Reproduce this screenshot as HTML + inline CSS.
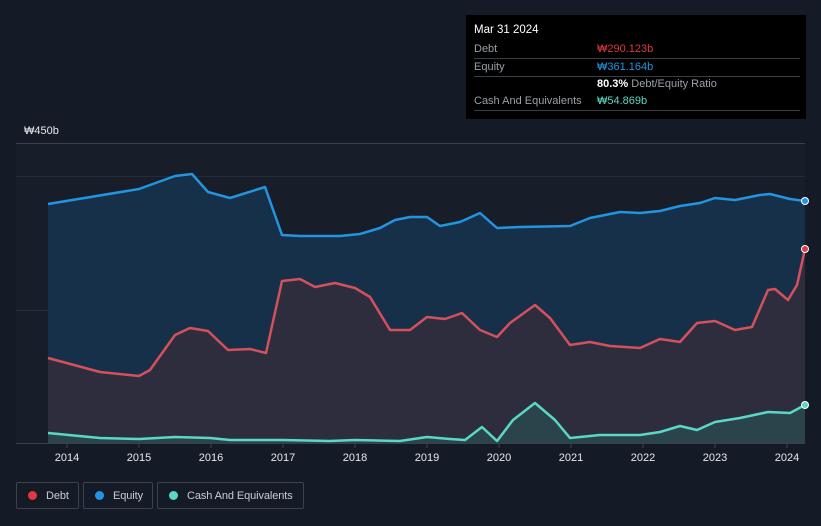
<!DOCTYPE html>
<html><head><style>
html,body{margin:0;width:821px;height:526px;overflow:hidden}
body{background:#151b26;font-family:"Liberation Sans",sans-serif;position:relative}
.tt{position:absolute;left:466px;top:15px;width:340px;height:104px;background:#000;color:#fff;font-size:11px}
.row{position:absolute;left:8px;right:6px;height:17px;border-bottom:1px solid #3a3f47;line-height:17px}
.lab{color:#9aa0a8;position:absolute;left:0}
.val{position:absolute;left:123px;white-space:nowrap}
.leg{position:absolute;top:482px;height:27px;border:1px solid #3c424c;border-radius:2px;color:#c9ccd1;font-size:11px;letter-spacing:-0.1px;line-height:26px;box-sizing:border-box;white-space:nowrap}
.leg i{display:inline-block;width:9px;height:9px;border-radius:50%;margin:0 9px 0 11px;vertical-align:-1px}
.ax{position:absolute;color:#e6e8ea;font-size:11px}
</style></head><body>
<div class="tt">
<div style="position:absolute;left:8px;top:9px;font-size:11.5px">Mar 31 2024</div>
<div class="row" style="top:26px"><span class="lab">Debt</span><span class="val" style="color:#e0393e">₩290.123b</span></div>
<div class="row" style="top:44px"><span class="lab">Equity</span><span class="val" style="color:#2394df">₩361.164b</span></div>
<div class="row" style="top:61px;border:none"><span class="val"><b style="font-weight:bold">80.3%</b> <span style="color:#9aa0a8">Debt/Equity Ratio</span></span></div>
<div class="row" style="top:78px"><span class="lab">Cash And Equivalents</span><span class="val" style="color:#58d8c5">₩54.869b</span></div>
</div>
<div class="ax" style="left:24px;top:125px">₩450b</div>
<div class="ax" style="left:24px;top:425px">₩0</div>
<svg width="821" height="526" style="position:absolute;left:0;top:0">
<rect x="16" y="143" width="789" height="300" fill="#171d29"/>
<line x1="16" y1="143.5" x2="805" y2="143.5" stroke="#3a404a"/>
<line x1="16" y1="176.5" x2="805" y2="176.5" stroke="#262c37"/>
<line x1="16" y1="310.5" x2="805" y2="310.5" stroke="#262c37"/>
<line x1="16" y1="443.5" x2="805" y2="443.5" stroke="#3a404a"/>
<path d="M48,204 L139,189 L175,176 L192,174 L208,192 L230,198 L265,187 L282,235 L300,236 L340,236 L360,234 L380,228 L395,220 L410,217 L427,217 L440,226 L460,222 L480,213 L497,228 L520,227 L570,226 L590,218 L620,212 L640,213 L660,211 L680,206 L700,203 L715,198 L735,200 L760,195 L770,194 L790,199 L805,201 L805,443 L48,443Z" fill="#173049"/>
<path d="M48,358 L100,372 L139,376 L150,370 L175,335 L190,328 L208,331 L228,350 L250,349 L266,353 L282,281 L300,279 L315,287 L335,283 L355,288 L370,297 L390,330 L410,330 L427,317 L445,319 L462,313 L480,330 L497,337 L510,323 L535,305 L550,318 L570,345 L590,342 L610,346 L640,348 L660,339 L680,342 L697,323 L715,321 L735,330 L752,327 L768,290 L775,289 L788,300 L797,285 L805,249 L805,443 L48,443Z" fill="#2e2d3e"/>
<path d="M48,433 L100,438 L139,439 L175,437 L210,438 L230,440 L282,440 L330,441 L355,440 L400,441 L427,437 L450,439 L465,440 L482,427 L497,441 L513,420 L535,403 L555,420 L570,438 L600,435 L640,435 L660,432 L680,426 L697,430 L715,422 L740,418 L768,412 L790,413 L805,405 L805,443 L48,443Z" fill="#2a4a50" opacity=".8"/>
<g fill="none" stroke-width="2.5" stroke-linejoin="round">
<path d="M48,204 L139,189 L175,176 L192,174 L208,192 L230,198 L265,187 L282,235 L300,236 L340,236 L360,234 L380,228 L395,220 L410,217 L427,217 L440,226 L460,222 L480,213 L497,228 L520,227 L570,226 L590,218 L620,212 L640,213 L660,211 L680,206 L700,203 L715,198 L735,200 L760,195 L770,194 L790,199 L805,201" stroke="#2394df"/>
<path d="M48,358 L100,372 L139,376 L150,370 L175,335 L190,328 L208,331 L228,350 L250,349 L266,353 L282,281 L300,279 L315,287 L335,283 L355,288 L370,297 L390,330 L410,330 L427,317 L445,319 L462,313 L480,330 L497,337 L510,323 L535,305 L550,318 L570,345 L590,342 L610,346 L640,348 L660,339 L680,342 L697,323 L715,321 L735,330 L752,327 L768,290 L775,289 L788,300 L797,285 L805,249" stroke="#d4505d"/>
<path d="M48,433 L100,438 L139,439 L175,437 L210,438 L230,440 L282,440 L330,441 L355,440 L400,441 L427,437 L450,439 L465,440 L482,427 L497,441 L513,420 L535,403 L555,420 L570,438 L600,435 L640,435 L660,432 L680,426 L697,430 L715,422 L740,418 L768,412 L790,413 L805,405" stroke="#58d8c5"/>
</g>
<circle cx="805" cy="201" r="3.5" fill="#2394df" stroke="#fff" stroke-width="1"/>
<circle cx="805" cy="249" r="3.5" fill="#e0393e" stroke="#fff" stroke-width="1"/>
<circle cx="805" cy="405" r="3.5" fill="#58d8c5" stroke="#fff" stroke-width="1"/>
<g stroke="#3a404a"><line x1="67" y1="443" x2="67" y2="448"/><line x1="139" y1="443" x2="139" y2="448"/><line x1="211" y1="443" x2="211" y2="448"/><line x1="283" y1="443" x2="283" y2="448"/><line x1="355" y1="443" x2="355" y2="448"/><line x1="427" y1="443" x2="427" y2="448"/><line x1="499" y1="443" x2="499" y2="448"/><line x1="571" y1="443" x2="571" y2="448"/><line x1="643" y1="443" x2="643" y2="448"/><line x1="715" y1="443" x2="715" y2="448"/><line x1="787" y1="443" x2="787" y2="448"/></g>
<g fill="#e6e8ea" font-size="11" font-family="Liberation Sans" text-anchor="middle">
<text x="67" y="461">2014</text><text x="139" y="461">2015</text><text x="211" y="461">2016</text><text x="283" y="461">2017</text><text x="355" y="461">2018</text><text x="427" y="461">2019</text><text x="499" y="461">2020</text><text x="571" y="461">2021</text><text x="643" y="461">2022</text><text x="715" y="461">2023</text><text x="787" y="461">2024</text></g>
</svg>
<div class="leg" style="left:16px;width:63px"><i style="background:#e0393e"></i>Debt</div>
<div class="leg" style="left:83px;width:70px"><i style="background:#2394df"></i>Equity</div>
<div class="leg" style="left:157px;width:147px"><i style="background:#58d8c5"></i>Cash And Equivalents</div>
</body></html>
